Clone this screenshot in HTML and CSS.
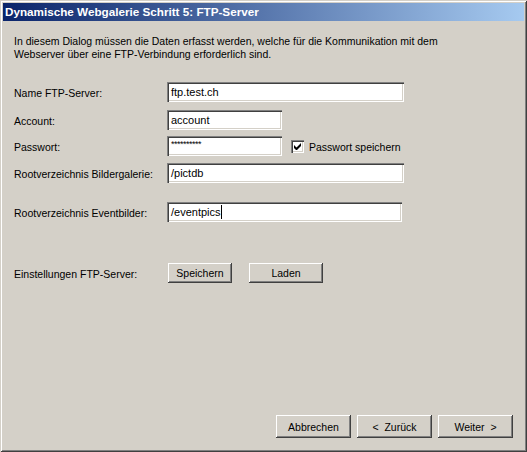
FILE: index.html
```html
<!DOCTYPE html>
<html>
<head>
<meta charset="utf-8">
<title>FTP-Server</title>
<link rel="stylesheet" href="styles.css">
</head>
<body>
<div class="window">
  <div class="titlebar">Dynamische Webgalerie Schritt 5: FTP-Server</div>
  <div class="content">
    <p class="intro">In diesem Dialog müssen die Daten erfasst werden, welche für die Kommunikation mit dem<br>Webserver über eine FTP-Verbindung erforderlich sind.</p>
    <div class="row row-name">
      <span class="label">Name FTP-Server:</span>
      <div class="input wide">ftp.test.ch</div>
    </div>
    <div class="row row-account">
      <span class="label">Account:</span>
      <div class="input short">account</div>
    </div>
    <div class="row row-pass">
      <span class="label">Passwort:</span>
      <div class="input short pass"><span class="stars">**********</span></div>
      <span class="checkbox"><svg width="7" height="7" viewBox="0 0 7 7"><path d="M0 2v3l2 2h1l4-4V0L2.5 4.5z" fill="#000"/></svg></span>
      <span class="check-label">Passwort speichern</span>
    </div>
    <div class="row row-bilder">
      <span class="label">Rootverzeichnis Bildergalerie:</span>
      <div class="input wide">/pictdb</div>
    </div>
    <div class="row row-event">
      <span class="label">Rootverzeichnis Eventbilder:</span>
      <div class="input event">/eventpics<span class="caret"></span></div>
    </div>
    <div class="row row-settings">
      <span class="label">Einstellungen FTP-Server:</span>
      <div class="btn btn-save">Speichern</div>
      <div class="btn btn-load">Laden</div>
    </div>
  </div>
  <div class="footer">
    <div class="btn btn-big">Abbrechen</div>
    <div class="btn btn-big">&lt;&nbsp; Zurück</div>
    <div class="btn btn-big">Weiter &nbsp;&gt;</div>
  </div>
</div>
</body>
</html>
```

FILE: styles.css
```css
html, body {
  margin: 0;
  padding: 0;
  background: #d4d0c8;
}
body {
  font-family: "Liberation Sans", Arial, sans-serif;
  font-size: 10.5px;
  color: #000;
}
.window {
  width: 527px;
  height: 452px;
  box-sizing: border-box;
  padding: 3px;
  background: #d4d0c8;
  display: flex;
  flex-direction: column;
  box-shadow: inset 1px 1px #d4d0c8, inset -1px -1px #404040, inset 2px 2px #ffffff, inset -2px -2px #808080;
}
.titlebar {
  height: 18px;
  line-height: 18px;
  padding-left: 2px;
  background: linear-gradient(to right, #0a246a, #a6caf0);
  color: #fff;
  font-weight: bold;
  font-size: 11.7px;
  white-space: nowrap;
}
.content {
  padding-left: 11px;
}
.intro {
  margin: 14px 0 0 0;
  line-height: 13px;
  white-space: nowrap;
}
.row {
  display: flex;
  align-items: center;
  height: 20px;
}
.label {
  width: 153px;
  flex: none;
  padding-top: 2px;
  white-space: nowrap;
}
.row-name { margin-top: 21px; }
.row-account { margin-top: 8px; }
.row-pass { margin-top: 6px; }
.row-bilder { margin-top: 7px; }
.row-event { margin-top: 19px; }
.row-settings { margin-top: 41px; }
.input {
  height: 20px;
  box-sizing: border-box;
  background: #fff;
  padding-left: 4px;
  line-height: 20px;
  font-size: 11px;
  white-space: nowrap;
  box-shadow: inset 1px 1px #808080, inset 2px 2px #404040, inset -1px -1px #ffffff, inset -2px -2px #d4d0c8;
}
.wide { width: 237px; }
.short { width: 115px; }
.event { width: 235px; }
.pass {
  position: relative;
}
.stars {
  font-size: 9px;
  line-height: 9px;
  position: absolute;
  left: 4px;
  top: 4px;
  letter-spacing: -0.5px;
}
.caret {
  display: inline-block;
  width: 1px;
  height: 14px;
  background: #000;
  vertical-align: middle;
  margin-top: -2px;
}
.checkbox {
  width: 13px;
  height: 13px;
  box-sizing: border-box;
  margin-left: 9px;
  background: #fff;
  display: flex;
  align-items: center;
  justify-content: center;
  box-shadow: inset 1px 1px #808080, inset 2px 2px #404040, inset -1px -1px #ffffff, inset -2px -2px #d4d0c8;
}
.checkbox svg { display: block; }
.check-label {
  margin-left: 5px;
  padding-top: 2px;
  white-space: nowrap;
}
.btn {
  height: 20px;
  box-sizing: border-box;
  display: flex;
  align-items: center;
  justify-content: center;
  background: #d4d0c8;
  white-space: nowrap;
  box-shadow: inset -1px -1px #404040, inset 1px 1px #ffffff, inset -2px -2px #808080, inset 2px 2px #d4d0c8;
}
.btn-save { width: 64px; margin-left: 1px; }
.btn-load { width: 74px; margin-left: 17px; }
.footer {
  margin-top: auto;
  margin-bottom: 11px;
  padding-right: 11px;
  display: flex;
  justify-content: flex-end;
  gap: 6px;
}
.btn-big {
  width: 75px;
  height: 23px;
}
```
